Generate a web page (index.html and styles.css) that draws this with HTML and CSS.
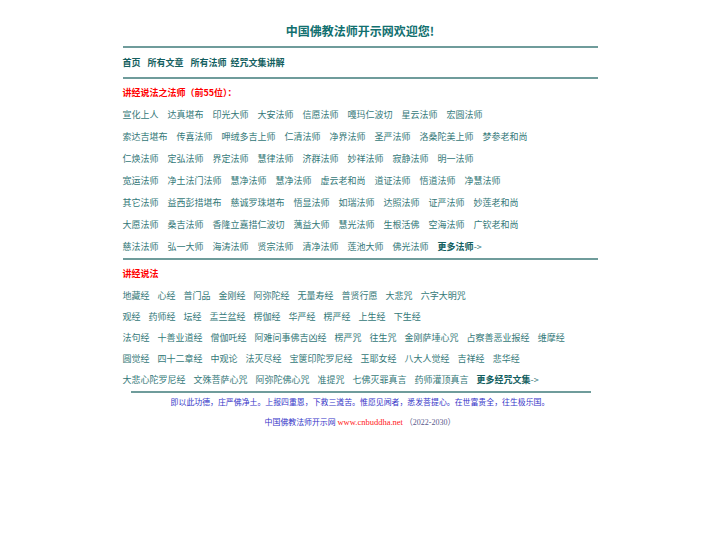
FILE: index.html
```html
<!DOCTYPE html>
<html lang="zh-CN">
<head>
<meta charset="utf-8">
<title>中国佛教法师开示网</title>
<link rel="stylesheet" href="styles.css">
</head>
<body>
<div class="page">
  <h1 class="title">中国佛教法师开示网欢迎您!</h1>
  <div class="rule"></div>
  <nav class="nav">
    <a href="#">首页</a><a href="#">所有文章</a><a href="#">所有法师</a><a href="#" class="last">经咒文集讲解</a>
  </nav>
  <div class="rule"></div>
  <div class="heading">讲经说法之法师（前55位）：</div>
  <div class="list masters">
    <div class="row"><a>宣化上人</a><a>达真堪布</a><a>印光大师</a><a>大安法师</a><a>信愿法师</a><a>嘎玛仁波切</a><a>星云法师</a><a>宏圆法师</a></div>
    <div class="row"><a>索达吉堪布</a><a>传喜法师</a><a>呷绒多吉上师</a><a>仁清法师</a><a>净界法师</a><a>圣严法师</a><a>洛桑陀美上师</a><a>梦参老和尚</a></div>
    <div class="row"><a>仁焕法师</a><a>定弘法师</a><a>界定法师</a><a>慧律法师</a><a>济群法师</a><a>妙祥法师</a><a>寂静法师</a><a>明一法师</a></div>
    <div class="row"><a>宽运法师</a><a>净土法门法师</a><a>慧净法师</a><a>慧净法师</a><a>虚云老和尚</a><a>道证法师</a><a>悟道法师</a><a>净慧法师</a></div>
    <div class="row"><a>其它法师</a><a>益西彭措堪布</a><a>慈诚罗珠堪布</a><a>悟显法师</a><a>如瑞法师</a><a>达照法师</a><a>证严法师</a><a>妙莲老和尚</a></div>
    <div class="row"><a>大愿法师</a><a>桑吉法师</a><a>香隆立嘉措仁波切</a><a>蕅益大师</a><a>慧光法师</a><a>生根活佛</a><a>空海法师</a><a>广钦老和尚</a></div>
    <div class="row"><a>慈法法师</a><a>弘一大师</a><a>海涛法师</a><a>贤宗法师</a><a>清净法师</a><a>莲池大师</a><a>佛光法师</a><a class="more"><b>更多法师</b>-&gt;</a></div>
  </div>
  <div class="rule"></div>
  <div class="heading">讲经说法</div>
  <div class="list sutras">
    <div class="row"><a>地藏经</a><a>心经</a><a>普门品</a><a>金刚经</a><a>阿弥陀经</a><a>无量寿经</a><a>普贤行愿</a><a>大悲咒</a><a>六字大明咒</a></div>
    <div class="row"><a>观经</a><a>药师经</a><a>坛经</a><a>盂兰盆经</a><a>楞伽经</a><a>华严经</a><a>楞严经</a><a>上生经</a><a>下生经</a></div>
    <div class="row"><a>法句经</a><a>十善业道经</a><a>僧伽吒经</a><a>阿难问事佛吉凶经</a><a>楞严咒</a><a>往生咒</a><a>金刚萨埵心咒</a><a>占察善恶业报经</a><a>维摩经</a></div>
    <div class="row"><a>圆觉经</a><a>四十二章经</a><a>中观论</a><a>法灭尽经</a><a>宝箧印陀罗尼经</a><a>玉耶女经</a><a>八大人觉经</a><a>吉祥经</a><a>悲华经</a></div>
    <div class="row"><a>大悲心陀罗尼经</a><a>文殊菩萨心咒</a><a>阿弥陀佛心咒</a><a>准提咒</a><a>七佛灭罪真言</a><a>药师灌顶真言</a><a class="more"><b>更多经咒文集</b>-&gt;</a></div>
  </div>
  <div class="rule short"></div>
  <p class="verse">即以此功德，庄严佛净土。上报四重恩，下救三道苦。惟愿见闻者，悉发菩提心。在世富贵全，往生极乐国。</p>
  <p class="copy"><span class="site">中国佛教法师开示网</span> <span class="url">www.cnbuddha.net</span> <span class="year">（2022-2030）</span></p>
</div>
</body>
</html>
```
FILE: styles.css
```css
html, body {
  margin: 0;
  padding: 0;
  background: #ffffff;
}
body {
  font-family: "Noto Sans CJK SC", "Noto Sans", sans-serif;
  color: #337878;
}
.page {
  width: 475px;
  margin: 0 auto;
  padding-top: 22px;
}
.title {
  margin: 0 0 6px;
  font-size: 12px;
  line-height: 18px;
  font-weight: bold;
  text-align: center;
  color: #11706f;
}
.rule {
  height: 2px;
  background: #6f9c9b;
}
.rule.short {
  margin: 1px 7px 0 8px;
}
.nav {
  display: flex;
  gap: 7px;
  height: 29px;
  line-height: 29px;
  font-size: 9px;
  font-weight: bold;
}
.nav a {
  color: #145f5f;
  text-decoration: none;
}
.nav a.last {
  margin-left: -3px;
}
.heading {
  padding-top: 3px;
  line-height: 22px;
  font-size: 9px;
  font-weight: bold;
  color: #ff0000;
}
.list .row {
  display: flex;
  font-size: 9px;
  white-space: nowrap;
}
.masters .row {
  gap: 9px;
  line-height: 22px;
}
.sutras .row {
  gap: 8px;
  line-height: 21px;
}
.list a {
  color: #337878;
  text-decoration: none;
}
.list a.more b {
  color: #145f5f;
}
.verse, .copy {
  margin: 0;
  text-align: center;
  font-size: 7.9px;
  line-height: 18px;
  color: #3535c8;
}
.copy {
  margin-top: 2px;
}
.url {
  font-family: "Liberation Serif", serif;
  font-size: 8.5px;
  color: #ff2020;
}
.year {
  font-family: "Liberation Serif", "Noto Sans CJK SC", serif;
  font-size: 8px;
  color: #5a5a8c;
}
```
